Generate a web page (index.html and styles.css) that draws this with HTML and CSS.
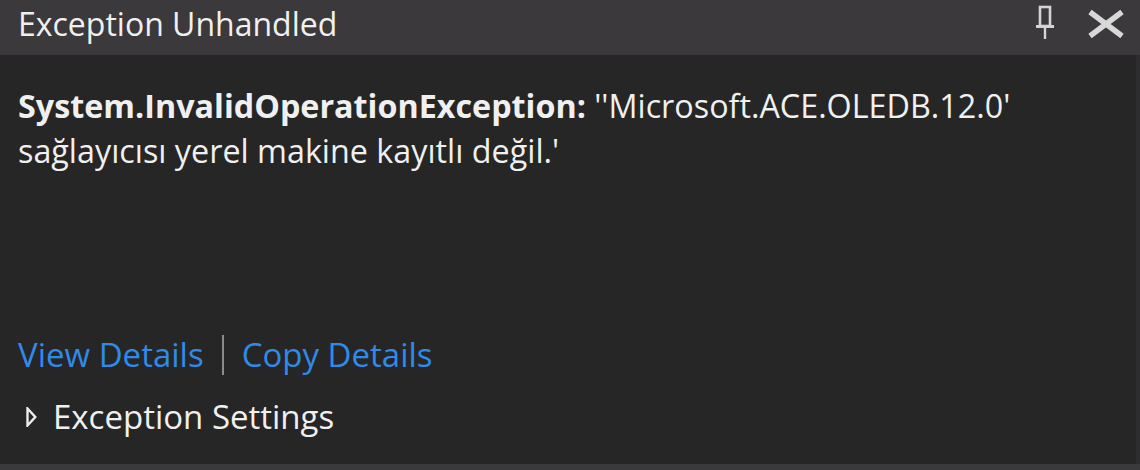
FILE: index.html
```html
<!DOCTYPE html>
<html>
<head>
<meta charset="utf-8">
<link rel="stylesheet" href="styles.css">
</head>
<body>
<div class="panel">
  <div class="header">
    <div class="title">Exception Unhandled</div>
    <div class="tools">
      <svg class="pin" width="22" height="36" viewBox="0 0 22 36">
        <rect x="6" y="2" width="10" height="19" fill="none" stroke="#d4d4d4" stroke-width="2.6"/>
        <rect x="2" y="20" width="18" height="3" fill="#d4d4d4"/>
        <rect x="9.8" y="22" width="2.4" height="12" fill="#d4d4d4"/>
      </svg>
      <svg class="close" width="40" height="30" viewBox="0 0 40 30">
        <path d="M4 3 L36 27 M36 3 L4 27" stroke="#d8d8d8" stroke-width="5.5" stroke-linecap="butt"/>
      </svg>
    </div>
  </div>
  <div class="content">
    <div class="message"><b>System.InvalidOperationException:</b> ''Microsoft.ACE.OLEDB.12.0' sağlayıcısı yerel makine kayıtlı değil.'</div>
    <div class="links">
      <span class="link">View Details</span>
      <span class="sep"></span>
      <span class="link">Copy Details</span>
    </div>
    <div class="settings">
      <svg class="tri" width="11" height="20" viewBox="0 0 11 20">
        <path d="M1.5 1.5 L9.3 10 L1.5 18.5 Z" fill="none" stroke="#ececec" stroke-width="2.4" stroke-linejoin="miter"/>
      </svg>
      <span>Exception Settings</span>
    </div>
  </div>
  <div class="footer"></div>
</div>
</body>
</html>
```

FILE: styles.css
```css
html, body {
  margin: 0;
  padding: 0;
  background: #262626;
}
.panel {
  width: 1140px;
  height: 470px;
  display: flex;
  flex-direction: column;
  font-family: "Open Sans", "Noto Sans", sans-serif;
  color: #f0f0f0;
}
.header {
  height: 55px;
  background: #3b393b;
  display: flex;
  align-items: flex-start;
  justify-content: space-between;
  padding: 0 14px 0 18px;
  flex: none;
  box-sizing: border-box;
}
.title {
  font-size: 32px;
  line-height: 48px;
  color: #f0f0f0;
}
.tools {
  display: flex;
  align-items: flex-start;
  gap: 30px;
  padding-top: 5px;
}
.close {
  margin-top: 4px;
}
.content {
  flex: 1;
  background: #262626;
  padding: 0 18px;
  display: flex;
  flex-direction: column;
  border-right: 4px solid #2d2d2f;
}
.message {
  margin-top: 28px;
  font-size: 32.3px;
  line-height: 45px;
  width: 1060px;
}
.message b {
  font-weight: 700;
}
.links {
  margin-top: auto;
  display: flex;
  align-items: center;
  gap: 18px;
  font-size: 33px;
  line-height: 44px;
  color: #2f8ae8;
}
.sep {
  width: 2px;
  height: 40px;
  background: #8c8c8c;
}
.settings {
  display: flex;
  align-items: center;
  gap: 16px;
  margin: 18px 0 25px 8px;
  font-size: 33px;
  line-height: 44px;
}
.footer {
  height: 6px;
  background: #3a3a3d;
  flex: none;
}
```
